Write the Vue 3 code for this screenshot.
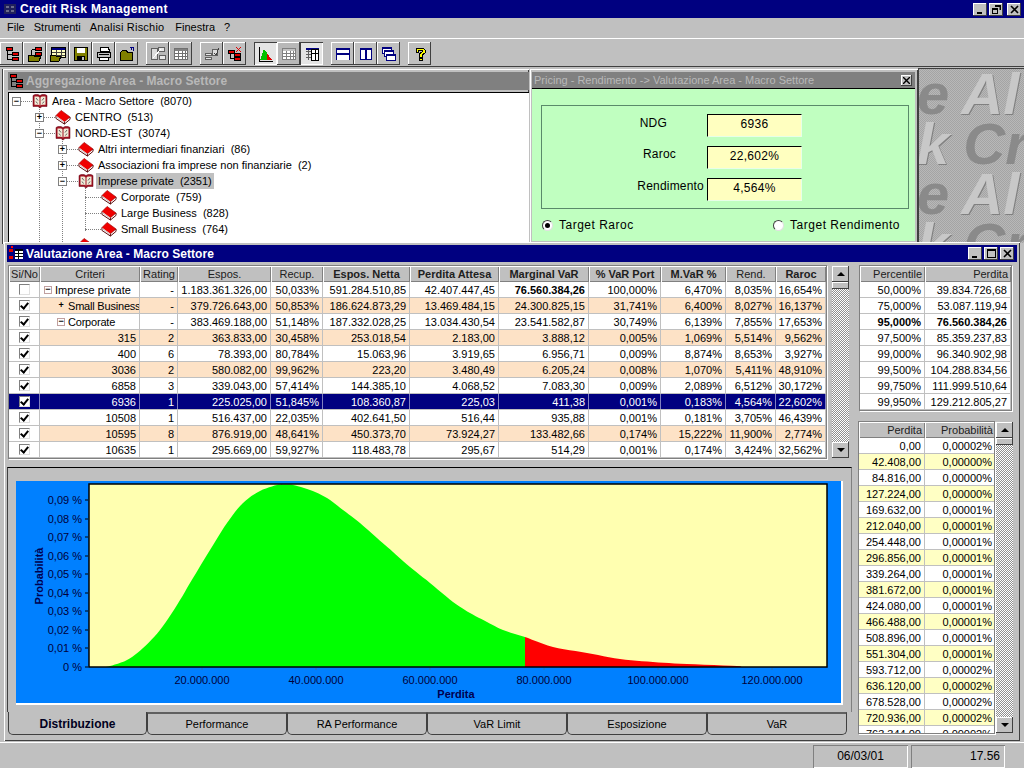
<template>
  <div class="app">
    <!-- barra titolo -->
    <div class="titlebar">
      <svg class="app-icon" width="14" height="14" viewBox="0 0 14 14">
        <path d="M1 2h12v10H1z" fill="#20205c" />
        <path d="M3 4h3v2H3zM8 4h3v2H8zM3 8h3v2H3zM8 8h3v2H8z" fill="#6a6a8c" />
      </svg>
      <span class="app-title">Credit Risk Management</span>
      <div class="ctl-group main-ctl">
        <button class="ctl"><svg width="9" height="9" viewBox="0 0 9 9"><path d="M1 7h5v2H1z" /></svg></button>
        <button class="ctl"><svg width="9" height="9" viewBox="0 0 9 9"><path d="M3 0h6v5H7.500V2H3zM0 3h6v6H0zM1 5v3h4V5z" fill-rule="evenodd" /></svg></button>
        <button class="ctl ctl-close"><svg width="9" height="9" viewBox="0 0 9 9"><path d="M1 1l7 7M8 1l-7 7" stroke="#000" stroke-width="1.6" /></svg></button>
      </div>
    </div>

    <!-- menu -->
    <div class="menubar">
      <span>File</span>
      <span>Strumenti</span>
      <span class="menu-wide">Analisi Rischio</span>
      <span>Finestra</span>
      <span>?</span>
    </div>

    <!-- toolbar -->
    <div class="toolbar">
      <div v-for="(group, g) in toolbar" :key="g" class="tool-group">
        <button
          v-for="(btn, i) in group"
          :key="i"
          class="tool"
          :class="{ pressed: btn.pressed, dim: btn.dim }"
        >
          <svg width="16" height="16" viewBox="0 0 16 16">
            <path
              v-for="(p, k) in icons[btn.icon]"
              :key="k"
              :d="p.d"
              :fill="p.fill || 'none'"
              :stroke="p.stroke || 'none'"
              shape-rendering="crispEdges"
            />
          </svg>
        </button>
      </div>
    </div>

    <!-- area MDI -->
    <div class="desktop">
      <div class="wallpaper">
        <div class="wp-line"><span class="wp-e">e</span><span class="wp-a">Al</span></div>
        <div class="wp-line wp-shift"><span class="wp-a">k</span><span class="wp-e">Cr</span></div>
        <div class="wp-line"><span class="wp-e">e</span><span class="wp-a">Al</span></div>
        <div class="wp-line wp-shift"><span class="wp-a">k</span><span class="wp-e">Cr</span></div>
      </div>

      <!-- Aggregazione -->
      <div class="window win-agg">
        <div class="win-title inactive">
          <svg width="16" height="16" viewBox="0 0 16 16">
            <path v-for="(p, k) in icons.tree" :key="k" :d="p.d" :fill="p.fill || 'none'" :stroke="p.stroke || 'none'" shape-rendering="crispEdges" />
          </svg>
          <span>Aggregazione Area - Macro Settore</span>
        </div>
        <div class="tree">
          <span class="vline v1"></span>
          <span class="vline v2"></span>
          <span class="vline v3"></span>
          <div
            v-for="(node, i) in tree"
            :key="i"
            class="tree-row"
            :style="{ paddingLeft: node.depth * 23 + 'px' }"
          >
            <span class="gutter" :class="{ leaf: !node.toggle }">
              <span v-if="node.toggle" class="toggle">{{ node.toggle === 'open' ? '−' : '+' }}</span>
              <span class="hdots"></span>
            </span>
            <svg v-if="node.toggle === 'open'" class="book" width="16" height="15" viewBox="0 0 16 15">
              <path d="M1 1.500l2-1h3l2 1 2-1h3l2 1v11h-5l-2 1.500-2-1.500H1z" fill="#a01020" stroke="#600010" stroke-width=".5" />
              <path d="M2.500 2.500h3.800l1.200 1v8l-1.200-.8H2.500zM13.500 2.500H9.700l-1.200 1v8l1.200-.8h3.800z" fill="#f2ecd8" />
              <path d="M4 4l2 2.500M4 7.500l1.500 2M12 4l-2 2.500M12 7.500l-1.500 2" stroke="#606060" fill="none" />
            </svg>
            <svg v-else class="book" width="17" height="16" viewBox="0 0 17 16">
              <path d="M1 6l9 7v2.500L1 9z" fill="#fff" />
              <path d="M1 6.500L6.500 1 16 8l-6 5z" fill="#f00000" />
              <path d="M6.500 1L16 8l-6 5M1 6.500L6.500 1" stroke="#a00000" fill="none" stroke-width=".7" />
              <path d="M1 6.500v3l9 6 6-5V8" stroke="#500000" fill="none" />
              <path d="M10 13v2.500" stroke="#500000" />
              <path d="M2 8l7.500 5.500M2 7.500" stroke="#b0a0a0" fill="none" stroke-width=".7" />
            </svg>
            <span class="node-label" :class="{ selected: node.selected }">{{ node.label }}</span>
          </div>
        </div>
      </div>

      <!-- Pricing -->
      <div class="window win-pricing">
        <div class="win-title inactive thin">
          <span>Pricing - Rendimento -&gt; Valutazione Area - Macro Settore</span>
          <button class="ctl small"><svg width="7" height="7" viewBox="0 0 7 7"><path d="M0 0l7 7M7 0L0 7" stroke="#000" stroke-width="1.4" /></svg></button>
        </div>
        <div class="pricing-body">
          <div class="pricing-box">
            <div v-for="f in pricingFields" :key="f.label" class="field">
              <span class="field-label" :class="f.cls">{{ f.label }}</span>
              <span class="field-value">{{ f.value }}</span>
            </div>
          </div>
          <div class="radios">
            <label class="radio"><i class="dot on"></i>Target Raroc</label>
            <label class="radio"><i class="dot"></i>Target Rendimento</label>
          </div>
        </div>
      </div>

      <!-- Valutazione -->
      <div class="window win-val">
        <div class="win-title active">
          <svg width="16" height="16" viewBox="0 0 16 16">
            <path d="M1 3h4v3H1zM1 10h4v3H1z" fill="#e00000" />
            <path d="M3 0h2v2H3z" fill="#ff0000" />
            <path d="M7 3h8v10H7z" fill="#fff" />
            <path d="M7 3h8v2H7zM7 7h8v1H7zM7 10h8v1H7zM10 3h1v10h-1z" fill="#000" />
          </svg>
          <span>Valutazione Area - Macro Settore</span>
          <div class="ctl-group val-ctl">
            <button class="ctl"><svg width="9" height="9" viewBox="0 0 9 9"><path d="M1 7h5v2H1z" /></svg></button>
            <button class="ctl"><svg width="9" height="9" viewBox="0 0 9 9"><path d="M0 0h9v9H0zM1 2v6h7V2z" fill-rule="evenodd" /></svg></button>
            <button class="ctl ctl-close"><svg width="9" height="9" viewBox="0 0 9 9"><path d="M1 1l7 7M8 1l-7 7" stroke="#000" stroke-width="1.6" /></svg></button>
          </div>
        </div>

        <div class="val-body">
          <div class="val-left">
            <div class="main-grid-row">
              <div class="grid main-grid">
                <div class="row head">
                  <span v-for="c in columns" :key="c.t" class="cell" :class="{ b: c.b }">{{ c.t }}</span>
                </div>
                <div
                  v-for="(r, i) in rows"
                  :key="i"
                  class="row"
                  :class="{ alt: i % 2 === 1 && r.id !== '6936', sel: r.id === '6936' }"
                >
                  <span class="cell check-cell"><i class="check" :class="{ on: r.on }"></i></span>
                  <span v-if="r.level === 0" class="cell crit"><i class="tgl">−</i>{{ r.id }}</span>
                  <span v-else-if="r.level === 1" class="cell crit sub"><i class="tgl" :class="{ plain: r.plus }">{{ r.plus ? '+' : '−' }}</i>{{ r.id }}</span>
                  <span v-else class="cell num">{{ r.id }}</span>
                  <span
                    v-for="(v, k) in r.vals"
                    :key="k"
                    class="cell num"
                    :class="{ bold: i === 0 && k === 5 }"
                  >{{ v }}</span>
                </div>
              </div>
              <div class="scroll">
                <button class="sb-btn"><i class="arr up"></i></button>
                <button class="sb-thumb"></button>
                <div class="sb-track"></div>
                <button class="sb-btn"><i class="arr down"></i></button>
              </div>
            </div>

            <div class="chart-wrap">
              <div class="chart-panel">
                <svg class="chart" width="827" height="224" viewBox="16 481 827 224">
                  <rect x="16" y="481" width="827" height="224" fill="#fff" />
                  <rect x="16" y="481" width="825" height="222" fill="#0080ff" />
                  <rect x="89" y="484" width="738" height="183" fill="#ffffb0" />
                  <polygon :points="greenPts" fill="#00ff00" />
                  <polygon :points="redPts" fill="#ff0000" />
                  <rect x="89" y="484" width="738" height="183" fill="none" stroke="#000" stroke-width="1.500" />
                  <text
                    v-for="t in yTicks"
                    :key="t.l"
                    class="ax"
                    x="82"
                    :y="t.y + 4"
                    text-anchor="end"
                  >{{ t.l }}</text>
                  <path
                    v-for="t in yTicks"
                    :key="'m' + t.l"
                    :d="`M85 ${t.y}h3`"
                    stroke="#000"
                  />
                  <text
                    v-for="t in xTicks"
                    :key="t.l"
                    class="ax"
                    :x="t.x"
                    y="684"
                    text-anchor="middle"
                  >{{ t.l }}</text>
                  <path
                    v-for="t in xTicks"
                    :key="'x' + t.l"
                    :d="`M${t.x} 668v2`"
                    stroke="#3070b0"
                  />
                  <text class="ax-b" x="456" y="698" text-anchor="middle">Perdita</text>
                  <text class="ax-b" transform="translate(43 576) rotate(-90)" text-anchor="middle">Probabilità</text>
                </svg>
              </div>
              <div class="tabs">
                <div
                  v-for="(t, i) in tabs"
                  :key="t"
                  class="tab"
                  :class="{ current: i === 0 }"
                >{{ t }}</div>
              </div>
            </div>
          </div>

          <div class="val-right">
            <div class="grid perc-grid">
              <div class="row head"><span class="cell">Percentile</span><span class="cell">Perdita</span></div>
              <div v-for="p in percentiles" :key="p[0]" class="row" :class="{ bold: p[2] }">
                <span class="cell num">{{ p[0] }}</span><span class="cell num">{{ p[1] }}</span>
              </div>
            </div>
            <div class="prob-wrap">
              <div class="grid prob-grid">
                <div class="row head"><span class="cell">Perdita</span><span class="cell">Probabilità</span></div>
                <div v-for="(p, i) in probs" :key="i" class="row" :class="{ yel: i % 2 === 1 }">
                  <span class="cell num">{{ p[0] }}</span><span class="cell num">{{ p[1] }}</span>
                </div>
              </div>
              <div class="scroll">
                <button class="sb-btn"><i class="arr up"></i></button>
                <button class="sb-thumb"></button>
                <div class="sb-track"></div>
                <button class="sb-btn"><i class="arr down"></i></button>
              </div>
            </div>
          </div>
        </div>
      </div>
    </div>

    <!-- barra di stato -->
    <div class="statusbar">
      <span class="st date">06/03/01</span>
      <span class="st time">17.56</span>
    </div>
  </div>
</template>

<script setup>
const RED = '#e00000'
const OLIVE = '#808000'
const NAVY = '#000080'

const treeShape = (c1, c2) => [
  { d: 'M3.500 5v9M3.500 8.500h4M3.500 13.500h4', stroke: c2 },
  { d: 'M2 1.500h6v3H2z', fill: c1, stroke: c2 },
  { d: 'M8 6.500h6v3H8z', fill: c1, stroke: c2 },
  { d: 'M8 11.500h6v3H8z', fill: c1, stroke: c2 }
]

const tableShape = (head, line) => [
  { d: 'M1.500 2.500h13v11h-13z', fill: '#fff', stroke: line },
  { d: 'M2 3h12v2H2z', fill: head },
  { d: 'M2 7.500h12M2 10.500h12M5.500 5v8M9.500 5v8M12.500 5v8', stroke: line }
]

const icons = {
  tree: treeShape(RED, '#000'),
  treeFolder: [
    { d: 'M8 1.500h6v3H8zM8 6.500h6v3H8z', fill: RED, stroke: '#000' },
    { d: 'M4.500 4v5h3M4.500 3.500h3', stroke: '#000' },
    { d: 'M1 9h5l1 1h7l-2 5H1z', fill: OLIVE, stroke: '#000' }
  ],
  tableFolder: [
    { d: 'M1.500 1.500h14v10h-14z', fill: '#ffffc0', stroke: '#000' },
    { d: 'M2 2h13v2H2z', fill: NAVY },
    { d: 'M2 6.500h13M2 9.500h13M6.500 4v7M11.500 4v7', stroke: '#404040' },
    { d: 'M0 9h5l1 1h5l-2 5H0z', fill: OLIVE, stroke: '#000' }
  ],
  save: [
    { d: 'M1.500 1.500h13v13h-13z', fill: OLIVE, stroke: '#000' },
    { d: 'M4 2h8v5H4z', fill: '#fff' },
    { d: 'M4 10h8v5H4z', fill: '#000' },
    { d: 'M9 11h2v3H9z', fill: '#c0c0c0' }
  ],
  print: [
    { d: 'M4.500 1.500h8l1 4h-9z', fill: '#fff', stroke: '#000' },
    { d: 'M1.500 6.500h13v5h-13z', fill: '#c0c0c0', stroke: '#000' },
    { d: 'M3.500 11.500h9v3h-9z', fill: '#fff', stroke: '#000' },
    { d: 'M3 8.500h10', stroke: '#000' }
  ],
  folderUp: [
    { d: 'M1.500 6.500l2-2h4l1 2h5v8h-12z', fill: OLIVE, stroke: '#000' },
    { d: 'M11.500 4.500l2-3M11 1.500h3v3', stroke: NAVY }
  ],
  treeDim: [
    { d: 'M1.500 2.500h6v11h-6z', fill: '#dcdcdc', stroke: '#606060' },
    { d: 'M8 1.500h6v4H8zM9 9.500h6v4H9z', fill: '#e8e8e8', stroke: '#606060' },
    { d: 'M3 12l8-9', stroke: '#fff' }
  ],
  tableDim: tableShape('#808080', '#707070'),
  checkDim: [
    { d: 'M1.500 7.500h6v2h-6zM1.500 11.500h6v2h-6z', fill: '#e8e8e8', stroke: '#606060' },
    { d: 'M8.500 3.500h5v6h-5z', fill: '#dcdcdc', stroke: '#606060' },
    { d: 'M10 7l2 2 3-7', stroke: '#404040' }
  ],
  treeX: [
    { d: 'M3.500 4v9M3.500 7.500h4M3.500 12.500h4', stroke: '#000' },
    { d: 'M1 4.500h6v3H1z', fill: RED, stroke: '#000' },
    { d: 'M7 7.500h6v3H7zM7 11.500h6v3H7z', fill: RED, stroke: '#000' },
    { d: 'M9 1l5 5M14 1L9 6', stroke: '#e00000' }
  ],
  chart: [
    { d: 'M1 1v14h14', stroke: '#000' },
    { d: 'M2 14L6 3l3 4v7z', fill: '#00c000' },
    { d: 'M9 7l5 7H9z', fill: '#e00000' }
  ],
  tableGray: tableShape('#c0c0c0', '#808080'),
  split: [
    { d: 'M1.500 1.500h13v2h-13z', fill: NAVY },
    { d: 'M2 5.500h5M2 8.500h5M2 11.500h5M4.500 4v10', stroke: '#606060' },
    { d: 'M7.500 3.500h7v11h-7z', fill: '#fff', stroke: '#000' },
    { d: 'M8 7.500h6M11 4v10', stroke: '#000' }
  ],
  rows: [
    { d: 'M1.500 2.500h13v11h-13z', fill: '#fff', stroke: NAVY },
    { d: 'M2 2h12v2H2zM2 7h12v2H2z', fill: NAVY },
    { d: 'M2 11h12v3H2z', fill: '#fff' }
  ],
  cols: [
    { d: 'M2.500 2.500h11v11h-11z', fill: '#fff', stroke: NAVY },
    { d: 'M2 2h12v2H2zM7 2h2v12H7z', fill: NAVY }
  ],
  cascade: [
    { d: 'M1.500 1.500h9v6h-9z', fill: '#fff', stroke: NAVY },
    { d: 'M1 1h10v2H1z', fill: NAVY },
    { d: 'M3.500 4.500h9v6h-9z', fill: '#fff', stroke: NAVY },
    { d: 'M3 4h10v2H3z', fill: NAVY },
    { d: 'M5.500 8.500h9v6h-9z', fill: '#fff', stroke: NAVY },
    { d: 'M5 8h10v2H5z', fill: NAVY }
  ],
  help: [
    { d: 'M4 2h7l2 2v3l-3 2v2H7V8l3-2V4H6v2H4z', fill: '#ffff00', stroke: '#000' },
    { d: 'M7 12.500h3v2H7z', fill: '#ffff00', stroke: '#000' }
  ]
}

const toolbar = [
  [{ icon: 'tree' }, { icon: 'treeFolder' }, { icon: 'tableFolder' }, { icon: 'save' }, { icon: 'print' }, { icon: 'folderUp' }],
  [{ icon: 'treeDim', dim: true }, { icon: 'tableDim', dim: true }],
  [{ icon: 'checkDim', dim: true }, { icon: 'treeX' }],
  [{ icon: 'chart', pressed: true }, { icon: 'tableGray', dim: true }, { icon: 'split', pressed: true }],
  [{ icon: 'rows' }, { icon: 'cols' }, { icon: 'cascade' }],
  [{ icon: 'help' }]
]

const tree = [
  { depth: 0, toggle: 'open', label: 'Area - Macro Settore  (8070)' },
  { depth: 1, toggle: 'closed', label: 'CENTRO  (513)' },
  { depth: 1, toggle: 'open', label: 'NORD-EST  (3074)' },
  { depth: 2, toggle: 'closed', label: 'Altri intermediari finanziari  (86)' },
  { depth: 2, toggle: 'closed', label: 'Associazioni fra imprese non finanziarie  (2)' },
  { depth: 2, toggle: 'open', label: 'Imprese private  (2351)', selected: true },
  { depth: 3, label: 'Corporate  (759)' },
  { depth: 3, label: 'Large Business  (828)' },
  { depth: 3, label: 'Small Business  (764)' },
  { depth: 2, label: '' }
]

const pricingFields = [
  { label: 'NDG', value: '6936', cls: 'f-ndg' },
  { label: 'Raroc', value: '22,602%', cls: 'f-raroc' },
  { label: 'Rendimento', value: '4,564%', cls: 'f-rend' }
]

const columns = [
  { t: 'Si/No' }, { t: 'Criteri' }, { t: 'Rating' }, { t: 'Espos.' }, { t: 'Recup.' },
  { t: 'Espos. Netta', b: true }, { t: 'Perdita Attesa', b: true }, { t: 'Marginal VaR', b: true },
  { t: '% VaR Port', b: true }, { t: 'M.VaR %', b: true }, { t: 'Rend.' }, { t: 'Raroc', b: true }
]

const line = (id, level, on, ...vals) => ({ id, level, on, vals })

const rows = [
  line('Imprese private', 0, false, '-', '1.183.361.326,00', '50,033%', '591.284.510,85', '42.407.447,45', '76.560.384,26', '100,000%', '6,470%', '8,035%', '16,654%'),
  { ...line('Small Business', 1, true, '-', '379.726.643,00', '50,853%', '186.624.873,29', '13.469.484,15', '24.300.825,15', '31,741%', '6,400%', '8,027%', '16,137%'), plus: true },
  line('Corporate', 1, true, '-', '383.469.188,00', '51,148%', '187.332.028,25', '13.034.430,54', '23.541.582,87', '30,749%', '6,139%', '7,855%', '17,653%'),
  line('315', 2, true, '2', '363.833,00', '30,458%', '253.018,54', '2.183,00', '3.888,12', '0,005%', '1,069%', '5,514%', '9,562%'),
  line('400', 2, true, '6', '78.393,00', '80,784%', '15.063,96', '3.919,65', '6.956,71', '0,009%', '8,874%', '8,653%', '3,927%'),
  line('3036', 2, true, '2', '580.082,00', '99,962%', '223,20', '3.480,49', '6.205,24', '0,008%', '1,070%', '5,411%', '48,910%'),
  line('6858', 2, true, '3', '339.043,00', '57,414%', '144.385,10', '4.068,52', '7.083,30', '0,009%', '2,089%', '6,512%', '30,172%'),
  line('6936', 2, true, '1', '225.025,00', '51,845%', '108.360,87', '225,03', '411,38', '0,001%', '0,183%', '4,564%', '22,602%'),
  line('10508', 2, true, '1', '516.437,00', '22,035%', '402.641,50', '516,44', '935,88', '0,001%', '0,181%', '3,705%', '46,439%'),
  line('10595', 2, true, '8', '876.919,00', '48,641%', '450.373,70', '73.924,27', '133.482,66', '0,174%', '15,222%', '11,900%', '2,774%'),
  line('10635', 2, true, '1', '295.669,00', '59,927%', '118.483,78', '295,67', '514,29', '0,001%', '0,174%', '3,424%', '32,562%')
]

const percentiles = [
  ['50,000%', '39.834.726,68'],
  ['75,000%', '53.087.119,94'],
  ['95,000%', '76.560.384,26', true],
  ['97,500%', '85.359.237,83'],
  ['99,000%', '96.340.902,98'],
  ['99,500%', '104.288.834,56'],
  ['99,750%', '111.999.510,64'],
  ['99,950%', '129.212.805,27']
]

const probValues = ['2', '0', '0', '0', '1', '1', '1', '1', '1', '1', '1', '1', '1', '1', '2', '2', '2', '2', '2']
const fmt = (n) => n.toLocaleString('de-DE', { minimumFractionDigits: 2, maximumFractionDigits: 2 })
const probs = probValues.map((v, i) => [fmt(i * 42408), `0,0000${v}%`])

const tabs = ['Distribuzione', 'Performance', 'RA Performance', 'VaR Limit', 'Esposizione', 'VaR']

// curva letta dallo screenshot
const curve = [
  [104, 667], [110, 666], [127, 660], [143, 648], [160, 630], [177, 605], [193, 578], [210, 550],
  [227, 523], [243, 503], [260, 491], [277, 485], [285, 484.500], [293, 485], [310, 490], [327, 498],
  [343, 510], [360, 523], [377, 538], [393, 552], [410, 567], [430, 583], [453, 602], [470, 613],
  [487, 622], [503, 630], [525, 637]
]
const tail = [
  [525, 637], [553, 647], [587, 653], [620, 659], [653, 662], [687, 664], [737, 666], [740, 667]
]

// Catmull-Rom, così la curva non ha spigoli
const smooth = (pts) => {
  const out = []
  for (let i = 0; i < pts.length - 1; i++) {
    const p0 = pts[i - 1] || pts[i]
    const p1 = pts[i]
    const p2 = pts[i + 1]
    const p3 = pts[i + 2] || p2
    for (let s = 0; s < 6; s++) {
      const t = s / 6
      const f = (a, b, c, d) =>
        0.5 * (2 * b + (c - a) * t + (2 * a - 5 * b + 4 * c - d) * t * t + (3 * b - a - 3 * c + d) * t * t * t)
      out.push([f(p0[0], p1[0], p2[0], p3[0]).toFixed(1), f(p0[1], p1[1], p2[1], p3[1]).toFixed(1)])
    }
  }
  out.push(pts[pts.length - 1])
  return out
}
const toPoints = (list) => list.map((p) => p.join(',')).join(' ')
const greenPts = toPoints([...smooth(curve), [525, 667]])
const redPts = toPoints([...smooth(tail), [525, 667]])

const yTicks = ['0,09 %', '0,08 %', '0,07 %', '0,06 %', '0,05 %', '0,04 %', '0,03 %', '0,02 %', '0,01 %', '0 %']
  .map((l, i) => ({ l, y: Math.round(500 + i * 18.55) }))
const xTicks = ['20.000.000', '40.000.000', '60.000.000', '80.000.000', '100.000.000', '120.000.000']
  .map((l, i) => ({ l, x: 202 + i * 114 }))
</script>

<style>
html, body { margin: 0; padding: 0; background: #c0c0c0; }
</style>

<style scoped>
.app {
  width: 1024px;
  height: 768px;
  overflow: hidden;
  display: flex;
  flex-direction: column;
  background: #c0c0c0;
  font-family: "Liberation Sans", Arial, sans-serif;
  font-size: 11px;
  color: #000;
}

button { padding: 0; margin: 0; border: none; background: #c0c0c0; font: inherit; display: block; }

/* barra titolo */
.titlebar {
  height: 18px;
  flex: none;
  background: #000080;
  color: #fff;
  display: flex;
  align-items: center;
  padding-left: 3px;
}
.app-title { margin-left: 3px; font-weight: bold; font-size: 12px; letter-spacing: .35px; }
.ctl-group { margin-left: auto; display: flex; }
.main-ctl { margin-right: 3px; gap: 2px; }
.ctl {
  width: 14px;
  height: 13px;
  display: flex;
  align-items: center;
  justify-content: center;
  box-shadow: inset -1px -1px #404040, inset 1px 1px #fff;
}
.ctl-close { margin-left: 2px; }
.ctl.small { width: 11px; height: 11px; margin-left: auto; margin-right: 3px; }

/* menu */
.menubar {
  height: 18px;
  flex: none;
  box-sizing: border-box;
  display: flex;
  align-items: center;
  padding-left: 7px;
  gap: 9px;
}
.menu-wide { letter-spacing: .2px; margin-right: 2px; }

/* toolbar */
.toolbar {
  box-sizing: border-box;
  flex: none;
  height: 28px;
  margin-top: 2px;
  padding-top: 3px;
  border-top: 1px solid #fff;
  display: flex;
  gap: 8px;
}
.tool-group { display: flex; }
.tool {
  width: 23px;
  height: 23px;
  display: flex;
  align-items: center;
  justify-content: center;
  box-shadow: inset -1px -1px #404040, inset 1px 1px #fff;
}
.tool.pressed {
  background: #e4e4e4;
  box-shadow: inset 1px 1px #404040, inset -1px -1px #fff;
}
.tool.dim { background: #b8b8b8; }

/* desktop */
.desktop {
  flex: 1;
  position: relative;
  border-top: 1px solid #404040;
  min-height: 0;
  overflow: hidden;
}
.wallpaper {
  position: absolute;
  left: 918px;
  top: 1px;
  width: 106px;
  height: 174px;
  overflow: hidden;
  background: repeating-conic-gradient(#b8b8b8 0 25%, #a4a4a4 0 50%) 0 0 / 2px 2px;
  border-top: 1px solid #404040;
  border-left: 1px solid #404040;
  font-family: "Liberation Sans", Arial, sans-serif;
  font-weight: bold;
  font-style: italic;
  font-size: 58px;
  line-height: 50px;
  white-space: nowrap;
}
.wp-line { height: 50px; margin-left: -2px; display: flex; gap: 12px; }
.wp-shift { margin-left: -2px; gap: 14px; }
.wp-e { color: #8a8a8a; }
.wp-a { color: #c8c8c8; text-shadow: 1px 1px #808080; }

.window {
  position: absolute;
  background: #c0c0c0;
  box-shadow: inset 1px 1px #fff, inset -1px -1px #404040;
  box-sizing: border-box;
}
.win-title {
  display: flex;
  align-items: center;
  gap: 2px;
  font-weight: bold;
  font-size: 12px;
  letter-spacing: .05px;
}
.win-title.inactive { background: #808080; color: #b8b8b8; }
.win-title.active { background: #000080; color: #fff; }
.win-title.thin { font-weight: normal; font-size: 11px; letter-spacing: 0; height: 16px; padding-left: 2px; }

/* Aggregazione */
.win-agg { left: 2px; top: 2px; width: 527px; height: 175px; padding: 3px 0 0 5px; border-left: 1px solid #404040; }
.win-agg .win-title { height: 18px; }
.tree {
  position: relative;
  margin-top: 2px;
  height: 150px;
  overflow: hidden;
  background: #fff;
  box-sizing: border-box;
  border-top: 1px solid #000;
  border-left: 1px solid #000;
}
.tree-row { height: 16px; display: flex; align-items: center; position: relative; }
.gutter { width: 23px; flex: none; display: flex; align-items: center; height: 16px; padding-left: 3px; box-sizing: border-box; }
.gutter.leaf { padding-left: 7px; }
.toggle {
  width: 9px;
  height: 9px;
  box-sizing: border-box;
  border: 1px solid #808080;
  background: #fff;
  font-size: 9px;
  line-height: 6px;
  text-align: center;
  flex: none;
  font-weight: bold;
}
.hdots { flex: 1; border-top: 1px dotted #808080; }
.book { flex: none; width: 16px; }
.node-label { margin-left: 2px; padding: 1px 2px; white-space: pre; line-height: 14px; }
.node-label.selected { background: #c0c0c0; }
.vline { position: absolute; border-left: 1px dotted #808080; width: 0; }
.v1 { left: 30px; top: 10px; bottom: 0; }
.v2 { left: 53px; top: 42px; bottom: 0; }
.v3 { left: 76px; top: 90px; height: 48px; }

/* Pricing */
.win-pricing { left: 530px; top: 2px; width: 388px; height: 175px; padding: 3px 3px 0 2px; }
.pricing-body {
  height: 153px;
  box-sizing: border-box;
  background: #c0ffc0;
  border-top: 1px solid #000;
  padding: 16px 6px 0 9px;
}
.pricing-box {
  height: 104px;
  box-sizing: border-box;
  border: 1px solid #5a8a6a;
  padding-top: 8px;
  display: flex;
  flex-direction: column;
  gap: 10px;
}
.field { display: flex; align-items: flex-start; height: 22px; position: relative; }
.field-label { text-align: right; font-size: 12px; letter-spacing: .2px; flex: none; margin-top: 1px; }
.f-ndg { padding-right: 40px; width: 125px; margin-top: 2px; }
.f-raroc { padding-right: 31px; width: 134px; }
.f-rend { padding-right: 3px; width: 162px; }
.field-value {
  position: absolute;
  left: 165px;
  top: 0;
  width: 95px;
  height: 23px;
  box-sizing: border-box;
  background: #ffffc0;
  border-top: 1px solid #000;
  border-left: 1px solid #000;
  border-right: 1px solid #e8ffe8;
  border-bottom: 1px solid #e8ffe8;
  text-align: center;
  font-size: 12px;
  line-height: 19px;
  letter-spacing: .3px;
}
.radios { display: flex; justify-content: space-between; margin-top: 9px; padding: 0 9px 0 1px; }
.radio { display: flex; align-items: center; gap: 6px; font-size: 12px; letter-spacing: .5px; }
.dot {
  width: 11px;
  height: 11px;
  box-sizing: border-box;
  border-radius: 50%;
  background: #fff;
  border: 1px solid #404040;
  border-bottom-color: #e0e0e0;
  border-right-color: #e0e0e0;
  position: relative;
}
.dot.on::after {
  content: "";
  position: absolute;
  left: 2px;
  top: 2px;
  width: 5px;
  height: 5px;
  border-radius: 50%;
  background: #000;
}

/* Valutazione */
.win-val {
  left: 4px;
  top: 175px;
  width: 1016px;
  height: 499px;
  padding: 3px;
  z-index: 2;
}
.win-val .win-title { height: 17px; padding-left: 1px; }
.val-ctl { margin-right: 3px; }
.val-ctl .ctl { margin-left: 2px; }
.val-body { display: flex; padding-top: 3px; }
.val-left { width: 845px; flex: none; }
.val-right { margin-left: 6px; width: 155px; flex: none; }
.main-grid-row { display: flex; height: 195px; padding-left: 1px; }
.grid {
  background: #fff;
  box-shadow: 0 0 0 1px #808080, 1px 1px 0 1px #fff;
  overflow: hidden;
}
.main-grid { width: 817px; margin: 1px 0 0 1px; height: 192px; }
.row {
  display: grid;
  height: 16px;
  box-sizing: border-box;
  border-bottom: 1px solid #c0c0c0;
}
.main-grid .row { grid-template-columns: 31px 100px 38px 93px 52px 87px 89px 90px 72px 65px 50px 50px; }
.perc-grid .row { grid-template-columns: 65px 86px; }
.prob-grid .row { grid-template-columns: 66px 71px; }
.cell {
  display: flex;
  align-items: center;
  border-right: 1px solid #c0c0c0;
  padding: 0 3px;
  white-space: nowrap;
  overflow: hidden;
  box-sizing: border-box;
}
.cell.num { justify-content: flex-end; }
.row.head { background: #c0c0c0; border-bottom: none; }
.head .cell {
  justify-content: center;
  color: #202020;
  box-shadow: inset 1px 1px #fff, inset -1px -1px #808080;
  border-right: none;
}
.head .cell.b { font-weight: bold; }
.perc-grid .head .cell, .prob-grid .head .cell { justify-content: flex-end; }
.row.alt { background: #fde2c6; }
.row.alt .check-cell { background: #fff; }
.row.sel { background: #000080; color: #fff; }
.row.sel .cell { border-right-color: #8080c0; }
.row.yel { background: #ffffc4; }
.row.bold, .cell.bold { font-weight: bold; }
.check-cell { justify-content: center; padding: 0; }
.check {
  width: 11px;
  height: 11px;
  box-sizing: border-box;
  border: 1px solid #808080;
  border-right-color: #e0e0e0;
  border-bottom-color: #e0e0e0;
  background: #fff;
  position: relative;
  display: block;
}
.check.on::after {
  content: "";
  position: absolute;
  left: 2px;
  top: 0;
  width: 3px;
  height: 6px;
  border: solid #000;
  border-width: 0 2px 2px 0;
  transform: rotate(40deg);
}
.crit { padding-left: 4px; padding-right: 0; }
.crit.sub { padding-left: 17px; letter-spacing: -.2px; }
.tgl {
  width: 8px;
  height: 8px;
  box-sizing: border-box;
  border: 1px solid #c0a0a0;
  font-style: normal;
  font-size: 9px;
  line-height: 5px;
  text-align: center;
  margin-right: 3px;
  background: #fff;
  flex: none;
  font-weight: bold;
}
.tgl.plain { border-color: transparent; background: transparent; }

.scroll { width: 17px; flex: none; display: flex; flex-direction: column; }
.main-grid-row .scroll { margin-left: 6px; margin-top: 1px; height: 192px; }
.sb-btn {
  width: 17px;
  height: 16px;
  flex: none;
  display: flex;
  align-items: center;
  justify-content: center;
  box-shadow: inset -1px -1px #404040, inset 1px 1px #fff;
}
.sb-thumb {
  width: 17px;
  height: 7px;
  flex: none;
  box-shadow: inset -1px -1px #404040, inset 1px 1px #fff;
}
.sb-track {
  flex: 1;
  background: repeating-conic-gradient(#fff 0 25%, #909090 0 50%) 0 0 / 2px 2px;
}
.arr { width: 0; height: 0; border-left: 4px solid transparent; border-right: 4px solid transparent; }
.arr.up { border-bottom: 4px solid #000; }
.arr.down { border-top: 4px solid #000; }

/* grafico */
.chart-wrap { margin-top: 7px; }
.chart-panel {
  height: 245px;
  box-sizing: border-box;
  padding: 13px 0 0 8px;
  border-top: 1px solid #000;
  border-left: 1px solid #404040;
  border-right: 1px solid #808080;
  background: #c0c0c0;
}
.chart { display: block; }
.ax { font-size: 11px; fill: #00003a; font-family: "Liberation Sans", Arial, sans-serif; }
.ax-b { font-size: 11px; font-weight: bold; fill: #000050; font-family: "Liberation Sans", Arial, sans-serif; }
.tabs { display: flex; height: 23px; margin-left: 1px; }
.tab {
  width: 140px;
  flex: none;
  box-sizing: border-box;
  border: 1px solid #404040;
  border-top: 2px solid #606060;
  border-radius: 0 0 5px 5px;
  text-align: center;
  line-height: 21px;
  background: #c0c0c0;
}
.tab.current {
  width: 139px;
  border-top: none;
  font-weight: bold;
  line-height: 25px;
  font-size: 12px;
  color: #000020;
}

/* griglie destra */
.perc-grid { margin: 1px 0 0 2px; width: 151px; height: 144px; }
.prob-wrap { display: flex; margin: 12px 0 0 1px; height: 311px; }
.prob-grid { width: 137px; height: 311px; }
.prob-wrap .scroll { margin-left: 2px; height: 311px; }

/* stato */
.statusbar {
  height: 26px;
  flex: none;
  box-sizing: border-box;
  padding: 2px 19px 0 0;
  display: flex;
  justify-content: flex-end;
  gap: 3px;
  border-top: 1px solid #fff;
}
.st {
  box-sizing: border-box;
  height: 23px;
  box-shadow: inset 1px 1px #808080, inset -1px -1px #fff;
  font-size: 12px;
  line-height: 23px;
}
.date { width: 95px; text-align: center; }
.time { width: 94px; text-align: right; padding-right: 5px; }
</style>
